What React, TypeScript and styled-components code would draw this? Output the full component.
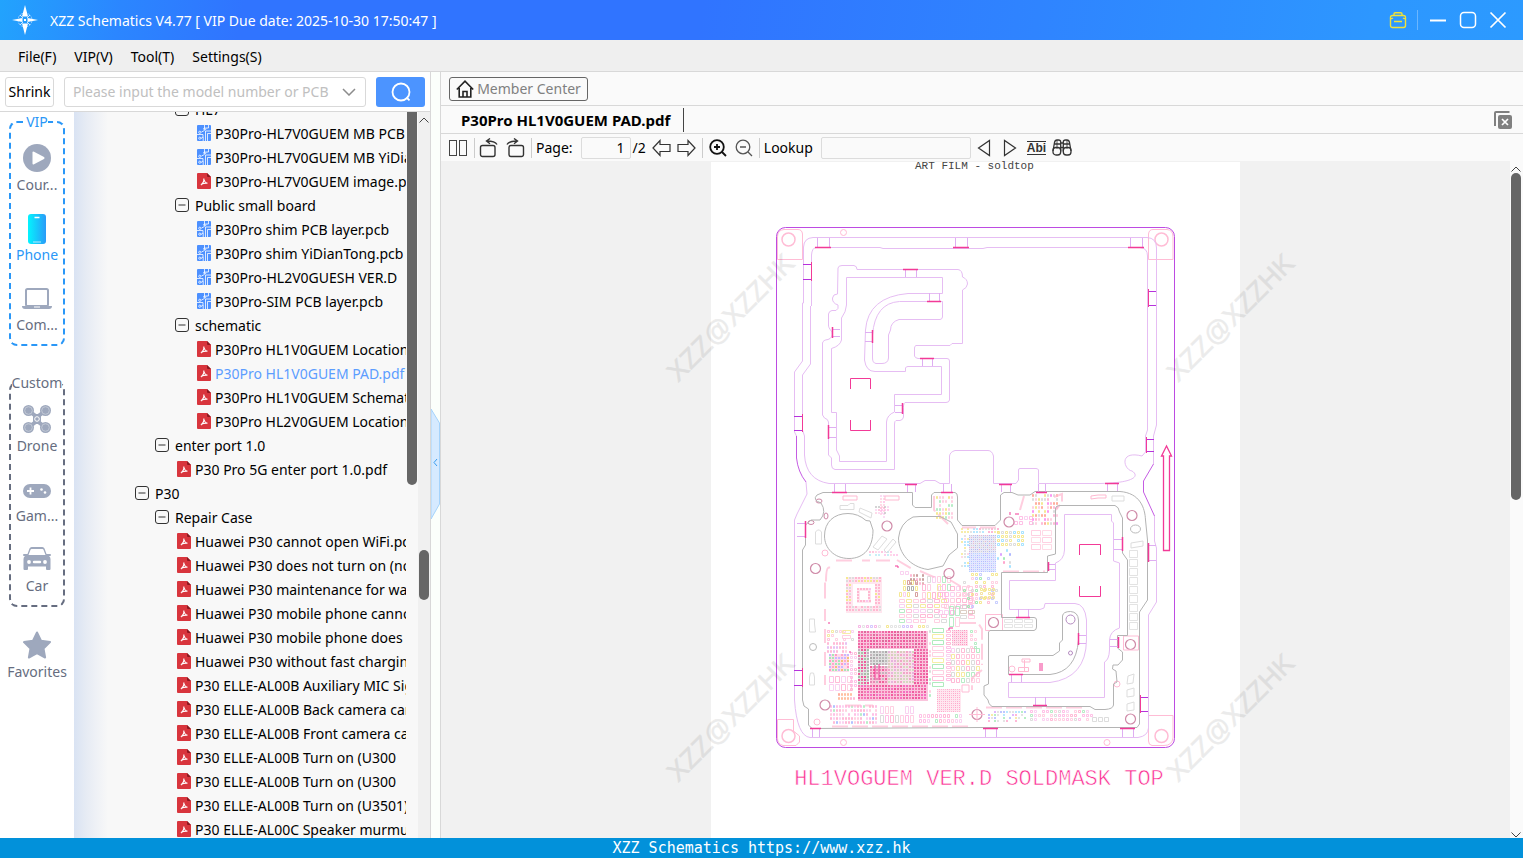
import React from 'react';
import styled, { createGlobalStyle } from 'styled-components';

const Global = createGlobalStyle`
  *, *::before, *::after { box-sizing: border-box; }
  body {
    margin: 0;
    font-family: "Noto Sans", "Open Sans", sans-serif;
    font-size: 14px;
    line-height: 20px;
    color: #000;
    overflow: hidden;
  }
  button, input { font: inherit; color: inherit; }
  button { cursor: pointer; }
  svg { display: block; flex: none; }
`;

const Window = styled.div`
  display: flex;
  flex-direction: column;
  height: 100vh;
  background: #fafafa;
`;

/* ---------- title bar ---------- */

const TitleBar = styled.header`
  display: flex;
  align-items: center;
  flex: none;
  height: 40px;
  padding: 0 16px 0 12px;
  background: linear-gradient(100deg, #22a3fd 0, #2b86ff 8%, #3074ff 16%, #3074ff 46%, #2f84ff 68%, #2d97ff 90%, #2c9aff 100%);
  color: #fff;
`;

const Title = styled.h1`
  flex: 1;
  margin: 0 0 0 12px;
  padding-top: 2px;
  font-size: 14px;
  font-weight: 400;
`;

const WindowButton = styled.button`
  display: flex;
  align-items: center;
  justify-content: center;
  width: 30px;
  height: 30px;
  padding: 0;
  border: 0;
  background: none;
  &:last-child { width: 18px; margin-left: 6px; }
`;

const TitleDivider = styled.span`
  width: 1px;
  height: 20px;
  margin: 0 5px 0 4px;
  background: #6bb6ff;
`;

const MenuBar = styled.nav`
  display: flex;
  align-items: center;
  flex: none;
  gap: 18px;
  height: 32px;
  padding: 0 18px;
  background: #efefef;
  border-bottom: 1px solid #d8d8d8;
`;

const MenuItem = styled.button`
  padding: 2px 0 0;
  border: 0;
  background: none;
`;

/* ---------- left side ---------- */

const Main = styled.main`
  display: flex;
  flex: 1;
  min-height: 0;
`;

const LeftPane = styled.section`
  display: flex;
  flex-direction: column;
  flex: none;
  width: 431px;
  border-right: 1px solid #d8d8d8;
  background: #fff;
`;

const SearchRow = styled.form`
  display: flex;
  align-items: center;
  flex: none;
  gap: 10px;
  height: 40px;
  padding: 0 5px;
  border-bottom: 1px solid #d8d8d8;
`;

const ShrinkButton = styled.button`
  width: 49px;
  height: 30px;
  padding: 0;
  border: 1px solid #d9d9d9;
  border-radius: 3px;
  background: #fff;
`;

const Combo = styled.label`
  display: flex;
  align-items: center;
  flex: 1;
  gap: 8px;
  min-width: 0;
  height: 30px;
  padding: 0 9px 0 8px;
  border: 1px solid #d9d9d9;
  border-radius: 3px;
`;

const ComboInput = styled.input`
  flex: 1;
  min-width: 0;
  padding: 0;
  border: 0;
  outline: 0;
  background: none;
  &::placeholder { color: #c0c0c0; opacity: 1; }
`;

const SearchButton = styled.button`
  display: flex;
  align-items: center;
  justify-content: center;
  width: 49px;
  height: 30px;
  padding: 0;
  border: 0;
  border-radius: 3px;
  background: #4c94ff;
`;

const LeftBody = styled.div`
  display: flex;
  flex: 1;
  min-height: 0;
`;

const Categories = styled.nav`
  display: flex;
  flex-direction: column;
  flex: none;
  width: 74px;
  padding: 0 9px;
`;

const Group = styled.fieldset<{ $active?: boolean }>`
  min-width: 0;
  margin: 0 0 27px;
  padding: 0 0 2px;
  border: 2px dashed ${p => (p.$active ? '#2a97f7' : '#666d80')};
  border-radius: 8px;
  & + & { margin-bottom: 12px; }
`;

const GroupName = styled.legend<{ $active?: boolean }>`
  margin: 0 auto;
  padding: 0;
  color: ${p => (p.$active ? '#2a97f7' : '#666d80')};
`;

const Category = styled.button<{ $active?: boolean }>`
  display: flex;
  flex-direction: column;
  align-items: center;
  width: 100%;
  height: 70px;
  padding: 10px 0 0;
  border: 0;
  background: none;
  color: ${p => (p.$active ? '#2a97f7' : '#666d80')};
  svg { margin-bottom: 1px; }
`;

const TreePane = styled.div`
  flex: 1;
  min-width: 0;
  overflow: hidden;
  background: linear-gradient(90deg, #d9e3f3 0, #e6ebf4 12px, #f8f8f8 34px);
`;

const TreeList = styled.ul`
  margin: -15px 0 0;
  padding: 0 1px 0 61px;
  list-style: none;
`;

const TreeRow = styled.li<{ $level: number; $selected?: boolean }>`
  display: flex;
  align-items: center;
  height: 24px;
  padding-left: ${p => p.$level * 20}px;
  overflow: hidden;
  white-space: nowrap;
  color: ${p => (p.$selected ? '#5c9dff' : '#000')};
`;

const TreeIcon = styled.span<{ $leaf: boolean }>`
  flex: none;
  width: 18px;
  margin-left: ${p => (p.$leaf ? '2px' : '0')};
  margin-right: ${p => (p.$leaf ? '0' : '2px')};
`;

const TreeName = styled.span`
  padding-top: 2px;
`;

const InnerTrack = styled.div`
  width: 11px;
  background: #f8f8f8;
`;

const InnerThumb = styled.div`
  width: 10px;
  height: 373px;
  border-radius: 0 0 5px 5px;
  background: #666;
`;

const Track = styled.div<{ $wide?: boolean }>`
  display: flex;
  flex-direction: column;
  align-items: center;
  flex: none;
  width: ${p => (p.$wide ? 13 : 12)}px;
  padding: 5px ${p => (p.$wide ? 1 : 0)}px 0 0;
  overflow: hidden;
  background: ${p => (p.$wide ? '#fafafa' : '#f0f0f0')};
`;

const Thumb = styled.div<{ $top: number; $height: number }>`
  flex: none;
  width: 10px;
  height: ${p => p.$height}px;
  margin-top: ${p => p.$top}px;
  border-radius: 5px;
  background: #666;
`;

const TrackEnd = styled.div`
  margin-top: auto;
`;

const Splitter = styled.div`
  display: flex;
  align-items: center;
  flex: none;
  width: 10px;
  padding-top: 18px;
  background: #fbfffb;
  border-right: 1px solid #d8d8d8;
`;

const SplitterHandle = styled.button`
  padding: 0;
  border: 0;
  background: none;
`;

/* ---------- right side ---------- */

const RightPane = styled.section`
  display: flex;
  flex-direction: column;
  flex: 1;
  min-width: 0;
`;

const TopTabs = styled.div`
  display: flex;
  align-items: center;
  flex: none;
  height: 34px;
  padding: 0 8px;
  border-bottom: 1px solid #d8d8d8;
`;

const MemberButton = styled.button`
  display: flex;
  align-items: center;
  justify-content: center;
  gap: 3px;
  width: 139px;
  height: 24px;
  padding: 0;
  border: 1px solid #666;
  border-radius: 3px;
  background: none;
  color: #808080;
`;

const DocTabs = styled.div`
  display: flex;
  align-items: center;
  justify-content: space-between;
  flex: none;
  height: 28px;
  padding: 0 11px 0 20px;
  border-bottom: 1px solid #d8d8d8;
`;

const DocTab = styled.button`
  height: 24px;
  padding: 0 13px 0 0;
  border: 0;
  border-right: 1px solid #444;
  background: none;
  font-size: 15px;
  font-weight: 700;
`;

const PlainButton = styled.button`
  display: flex;
  align-items: center;
  justify-content: center;
  padding: 0;
  border: 0;
  background: none;
`;

const Tools = styled.div`
  display: flex;
  align-items: center;
  flex: none;
  height: 27px;
  padding: 0 7px;
`;

const ToolGroup = styled.div<{ $gap: number; $lead?: number }>`
  display: flex;
  align-items: center;
  gap: ${p => p.$gap}px;
  margin-left: ${p => p.$lead || 0}px;
`;

const ToolDivider = styled.span`
  width: 1px;
  height: 20px;
  margin: 0 4px 0 6px;
  background: #ccc;
`;

const PageLabel = styled.label`
  display: flex;
  align-items: center;
  gap: 8px;
`;

const ToolInput = styled.input<{ $width: number }>`
  width: ${p => p.$width}px;
  height: 22px;
  padding: 0 5px;
  border: 1px solid #dcdcdc;
  border-radius: 2px;
  background: #fafafa;
  text-align: right;
`;

const WholeWord = styled.span`
  display: block;
  border-top: 1px solid #333;
  border-bottom: 1px solid #333;
  font-size: 12px;
  line-height: 12px;
  font-weight: 700;
  font-family: "Liberation Sans", sans-serif;
  color: #333;
`;

const Viewer = styled.div`
  display: flex;
  flex: 1;
  min-height: 0;
`;

const Desk = styled.div`
  display: flex;
  align-items: flex-start;
  justify-content: center;
  flex: 1;
  min-width: 0;
  padding-top: 1px;
  overflow: hidden;
  background: #f1f1f1;
`;

const Sheet = styled.svg`
  overflow: visible;
  background: #fff;
`;

const StatusBar = styled.footer`
  flex: none;
  height: 20px;
  background: #0291da;
  color: #fff;
  text-align: center;
  font-family: "DejaVu Sans Mono", monospace;
  font-size: 15px;
  line-height: 20px;
`;

/* ---------- icons ---------- */

const Logo = () => (
  <svg width="26" height="30" viewBox="0 0 26 30">
    <circle cx="13" cy="15" r="7" fill="none" stroke="#8fc8ff" strokeWidth="1" strokeDasharray="3 1" />
    <path d="M13 0l3 11.500h-6zM13 30l3-11.500h-6zM0 15l10.500-2v4zM26 15l-10.500-2v4z" fill="#fff" />
    <path d="M8 10l3 3M18 10l-3 3M8 20l3-3M18 20l-3-3" stroke="#cfe8ff" />
    <rect x="12" y="14" width="2" height="2" fill="#fff" />
  </svg>
);

const ToolboxIcon = () => (
  <svg width="18" height="18" viewBox="0 0 18 18" fill="none" stroke="#f0e23a" strokeWidth="1.400">
    <rect x="1.500" y="4.500" width="15" height="12" rx="2" />
    <path d="M5 4.500V3q0-1.200 1.200-1.200h5.600Q13 1.800 13 3v1.500M5 10.500h8M2 7q0 1.200 2 0M16 7q0 1.200-2 0" />
  </svg>
);

const MinimizeIcon = () => (
  <svg width="18" height="18" viewBox="0 0 18 18"><path d="M1 9.500h16" stroke="#fff" strokeWidth="2" /></svg>
);
const MaximizeIcon = () => (
  <svg width="18" height="18" viewBox="0 0 18 18"><rect x="1.500" y="1.500" width="15" height="15" rx="3.500" fill="none" stroke="#fff" strokeWidth="1.500" /></svg>
);
const CloseIcon = () => (
  <svg width="18" height="18" viewBox="0 0 18 18"><path d="M1.500 1.500l15 15M16.500 1.500l-15 15" stroke="#fff" strokeWidth="1.700" /></svg>
);

const ChevronDown = () => (
  <svg width="14" height="8" viewBox="0 0 14 8"><path d="M1 1l6 6 6-6" fill="none" stroke="#8c8c8c" strokeWidth="1.500" /></svg>
);
const ChevronUp = ({ flip }: { flip?: boolean }) => (
  <svg width="10" height="6" viewBox="0 0 10 6"><path d={flip ? 'M.5 .5L5 5 9.500 .5' : 'M.5 5.500L5 1l4.500 4.500'} fill="none" stroke="#444" /></svg>
);

const SearchIcon = () => (
  <svg width="20" height="20" viewBox="0 0 20 20" fill="none" stroke="#fff" strokeWidth="1.800">
    <circle cx="10" cy="10" r="8.500" />
    <path d="M15.500 15.500l3 2.800" />
  </svg>
);

const CourseIcon = () => (
  <svg width="28" height="32" viewBox="0 0 28 32">
    <circle cx="14" cy="16" r="14" fill="#9ea8bd" />
    <path d="M9.500 10.500q0-1.500 1.500-.8l10 5.300q1.300 1 0 2l-10 5.300q-1.500.7-1.500-.8z" fill="#fff" />
  </svg>
);
const PhoneIcon = () => (
  <svg width="28" height="32" viewBox="0 0 28 32">
    <defs>
      <linearGradient id="phone" x1="0" x2="1"><stop offset="0" stopColor="#04f4fe" /><stop offset="1" stopColor="#2a9bf8" /></linearGradient>
    </defs>
    <rect x="5" y="2" width="18" height="30" rx="3" fill="url(#phone)" />
    <path d="M11.500 5.500h5" stroke="#fff" strokeWidth="1.500" />
    <path d="M10 30h8" stroke="#b9ecff" />
  </svg>
);
const LaptopIcon = () => (
  <svg width="30" height="32" viewBox="0 0 30 32">
    <rect x="4" y="7" width="22" height="17" rx="1.500" fill="none" stroke="#9ea8bd" strokeWidth="2" />
    <path d="M0 24h30q0 3-3 3H3q-3 0-3-3z" fill="#9ea8bd" />
    <path d="M12 25h6" stroke="#fff" />
  </svg>
);
const DroneIcon = () => (
  <svg width="28" height="32" viewBox="0 0 28 32">
    <path d="M6 8l8 6 8-6M6 24l8-6 8 6" fill="none" stroke="#9ea8bd" strokeWidth="4" />
    <rect x="10" y="11" width="8" height="10" rx="3" fill="#9ea8bd" />
    {[[5.5, 7.5], [22.5, 7.5], [5.5, 24.5], [22.5, 24.5]].map(([x, y]) => (
      <g key={`${x}-${y}`}>
        <circle cx={x} cy={y} r="5.500" fill="#9ea8bd" />
        <circle cx={x} cy={y} r="3.800" fill="none" stroke="#c9cfdb" strokeWidth=".8" />
      </g>
    ))}
    <circle cx="14" cy="16" r="2.300" fill="none" stroke="#fff" />
  </svg>
);
const GameIcon = () => (
  <svg width="28" height="32" viewBox="0 0 28 32">
    <rect x="0" y="11" width="28" height="14" rx="7" fill="#9ea8bd" />
    <path d="M7.500 14.500v7M4 18h7" stroke="#fff" strokeWidth="1.800" />
    <circle cx="18.500" cy="16.500" r="1.300" fill="#fff" />
    <circle cx="22" cy="19.500" r="1.300" fill="#fff" />
  </svg>
);
const CarIcon = () => (
  <svg width="28" height="32" viewBox="0 0 28 32">
    <path transform="translate(0 2)" d="M6.500 3.500q.6-1.500 2.200-1.500h10.600q1.600 0 2.200 1.500L23.500 9H27q1 0 1 1t-1 1h-1q1.500 1 1.500 3v10q0 1-1 1H24q-1 0-1-1v-2.500H5V24q0 1-1 1H1.500q-1 0-1-1V14q0-2 1.500-3H1q-1 0-1-1t1-1h3.500z" fill="#9ea8bd" />
    <path d="M8.500 6h11q.7 0 1 .8l2 5.200h-17l2-5.200q.3-.8 1-.8z" fill="#fff" />
    <circle cx="6" cy="19" r="1.900" fill="#fff" />
    <circle cx="22" cy="19" r="1.900" fill="#fff" />
    <path d="M11 19h6" stroke="#fff" strokeWidth="2.400" strokeLinecap="round" />
  </svg>
);
const StarIcon = () => (
  <svg width="28" height="32" viewBox="0 0 28 32">
    <path d="M14 3.500l4 8.300 9 1.300-6.500 6.400 1.600 9-8.100-4.300-8.100 4.300 1.600-9L1 13.100l9-1.300z" fill="#9ea8bd" stroke="#9ea8bd" strokeWidth="2" strokeLinejoin="round" />
  </svg>
);

const CollapseIcon = () => (
  <svg width="14" height="14" viewBox="0 0 14 14" fill="none" stroke="#333">
    <rect x=".5" y=".5" width="13" height="13" rx="2.500" />
    <path d="M3.500 7h7" />
  </svg>
);
const PcbIcon = () => (
  <svg width="14" height="16" viewBox="0 0 14 16">
    <rect width="14" height="16" rx="1" fill="#4c90ff" />
    <g fill="none" stroke="#fff" strokeWidth=".8">
      <path d="M7.500 0v4.500M7.500 5.500L4.500 7M11.500 0v3H9M14 6H8.500v10M0 9.500h6V12L4 13.500M6.200 16v-4M10.500 16V8.500H14" />
      <circle cx="2.800" cy="7.300" r="1.100" />
      <circle cx="7.800" cy="3.800" r="1.100" />
      <circle cx="2.800" cy="13.200" r="1.100" />
    </g>
  </svg>
);
const PdfIcon = () => (
  <svg width="14" height="16" viewBox="0 0 14 16">
    <path d="M1 0h9l4 4v11q0 1-1 1H1q-1 0-1-1V1q0-1 1-1z" fill="#d8353d" />
    <path d="M10 0l4 4h-3q-1 0-1-1z" fill="#8c1820" />
    <path d="M6.700 5.500q.9 3-2.700 6.500M6.700 6q.8 3.500 3.800 4.200M4 11.500q3-1.700 6.500-1.300" fill="none" stroke="#fff" strokeWidth="1.100" />
  </svg>
);

const HomeIcon = () => (
  <svg width="18" height="18" viewBox="0 0 18 18" fill="none" stroke="#222" strokeWidth="1.600">
    <path d="M.8 9.500L9 1.200l8.200 8.300M3.200 8v9h11.600V8M7 17v-5.500h4V17" />
  </svg>
);
const CloseAllIcon = () => (
  <svg width="18" height="18" viewBox="0 0 18 18">
    <path d="M1 15V2q0-1 1-1h13.500" fill="none" stroke="#808080" strokeWidth="2" />
    <rect x="4" y="4" width="14" height="14" rx="2" fill="#808080" />
    <path d="M8 8l6 6M14 8l-6 6" stroke="#fff" strokeWidth="1.700" />
  </svg>
);
const TwoPagesIcon = () => (
  <svg width="20" height="18" viewBox="0 0 20 18" fill="none" stroke="#444">
    <rect x="1.500" y="1.500" width="7" height="15" /><rect x="11.500" y="1.500" width="7" height="15" />
  </svg>
);
const RotateIcon = ({ flip }: { flip?: boolean }) => (
  <svg width="19" height="20" viewBox="0 0 19 20" fill="none" stroke="#333" strokeWidth="1.400">
    <g transform={flip ? 'matrix(-1 0 0 1 19 0)' : undefined}>
      <rect x="1.500" y="7.500" width="14.500" height="11" rx="2" />
      <path d="M18 6.500Q16 3 8 3M11 .5L7.500 3 11 5.800" />
    </g>
  </svg>
);
const ArrowIcon = ({ flip }: { flip?: boolean }) => (
  <svg width="19" height="18" viewBox="0 0 19 18" fill="none" stroke="#333" strokeWidth="1.200">
    <path transform={flip ? 'matrix(-1 0 0 1 19 0)' : undefined} d="M1 9l7-7.500V5.500h10v7H8v4z" />
  </svg>
);
const ZoomIcon = ({ plus }: { plus?: boolean }) => (
  <svg width="18" height="18" viewBox="0 0 18 18" fill="none" stroke={plus ? '#111' : '#555'} strokeWidth={plus ? 1.8 : 1.3}>
    <circle cx="8" cy="8" r="6.800" />
    <path d={plus ? 'M13 13l4 4M5 8h6M8 5v6' : 'M13 13l4 4M5 8h6'} />
  </svg>
);
const TriangleIcon = ({ flip }: { flip?: boolean }) => (
  <svg width="14" height="18" viewBox="0 0 14 18" fill="none" stroke="#333" strokeWidth="1.200">
    <path transform={flip ? 'matrix(-1 0 0 1 14 0)' : undefined} d="M1.500 9L12.500 1.500v15z" />
  </svg>
);
const BinocularsIcon = () => (
  <svg width="20" height="17" viewBox="0 0 20 17" fill="none" stroke="#333" strokeWidth="1.300">
    <path d="M1 12L2.500 3.500Q3 1 5 1h1.500Q8.700 1 8.700 3v9.500M19 12l-1.500-8.500Q17 1 15 1h-1.500Q11.300 1 11.300 3v9.500M8.700 4h2.600M8.700 8.500h2.600M2.300 5h6.400M11.300 5h6.400" />
    <rect x="1" y="8.500" width="7.700" height="7.500" rx="3" /><rect x="11.300" y="8.500" width="7.700" height="7.500" rx="3" />
    <path d="M5 1v9M15 1v9" strokeWidth=".8" />
  </svg>
);
const HandleIcon = () => (
  <svg width="9" height="110" viewBox="0 0 9 110">
    <path d="M0 0l8.500 14v81L0 110z" fill="#d6eaff" stroke="#a5d3fb" />
    <path d="M6 50L3 53.500 6 57" fill="none" stroke="#3a9df0" />
  </svg>
);

/* ---------- board drawing ---------- */

const LILAC = '#e6bdf3';
const HOT = '#f23a97';
const SOFT = '#ffbcd5';
const GREY = '#b4b4b4';
const PURPLE = '#b632dc';

type Tab = [number, number, number, number, 't' | 'b' | 'l' | 'r'];

// Frame bridges: x, y, width, height and the edge that carries the solder bar.
const tabs: Tab[] = [
  [817, 238, 12, 9, 'b'], [955, 238, 12, 9, 'b'], [1130, 238, 12, 9, 'b'],
  [905, 269, 11, 8, 't'], [929, 293, 10, 8, 'b'], [865, 332, 7, 9, 'r'],
  [832, 329, 8, 7, 'l'], [922, 358, 10, 8, 't'], [895, 405, 7, 7, 'r'],
  [828, 427, 8, 10, 'l'], [834, 484, 11, 8, 'b'], [907, 484, 8, 8, 't'],
  [943, 484, 8, 8, 'b'], [1001, 484, 9, 8, 't'], [1038, 484, 7, 8, 'b'],
  [1107, 483, 10, 8, 't'], [797, 523, 8, 13, 'r'], [1148, 545, 8, 15, 'l'],
  [1114, 539, 8, 10, 'r'], [1048, 564, 7, 5, 'l'], [1018, 609, 10, 8, 'b'],
  [1078, 635, 8, 8, 'l'], [1110, 639, 8, 7, 'r'], [1011, 674, 10, 8, 't'],
  [1035, 697, 10, 8, 'b'], [812, 728, 7, 9, 't'], [985, 728, 11, 9, 't'],
  [1122, 728, 11, 9, 't'],
];

const darkTabs: Tab[] = [
  [803, 264, 8, 15, 'r'], [794, 416, 8, 14, 'r'], [1148, 291, 8, 14, 'l'],
  [1146, 439, 8, 12, 'l'], [794, 670, 8, 15, 'r'], [1140, 697, 8, 14, 'l'],
];

const barPath = ([x, y, w, h, side]: Tab) => {
  switch (side) {
    case 't': return `M${x - 2} ${y}.5h${w + 4}`;
    case 'b': return `M${x - 2} ${y + h}.5h${w + 4}`;
    case 'l': return `M${x}.5 ${y - 2}v${h + 4}`;
    default: return `M${x + w}.5 ${y - 2}v${h + 4}`;
  }
};

const legPath = ([x, y, w, h, side]: Tab) =>
  side === 't' || side === 'b'
    ? `M${x}.5 ${y}v${h}M${x + w}.5 ${y}v${h}`
    : `M${x} ${y}.5h${w}M${x} ${y + h}.5h${w}`;

type Cluster = {
  x: number; y: number; w: number; h: number;
  cell: [number, number]; density: number; colors: string[]; filled?: boolean;
};

const PINKS = ['#ffa9cb', '#ffc4db', '#ffb0e0', '#f9c6ee'];
const MIXED = ['#ffa9cb', '#ffc4db', '#f7c7ef', '#ffc4db', '#f2e58a', '#a5e8b8', '#d3d3d3', '#ffb4d2'];
const BRIGHT = ['#f3e27a', '#8fe6a5', '#8fdcff', '#ff8fc0', '#d08fff', '#9aa6ff', '#d4d4d4'];

const clusters: Cluster[] = [
  { x: 899, y: 580, w: 22, h: 18, cell: [4, 6], density: 0.8, colors: ['#999', '#f3e27a', '#c88', '#f9c6ee', '#f3e27a'] },
  { x: 899, y: 599, w: 50, h: 28, cell: [7, 5], density: 0.95, colors: MIXED },
  { x: 910, y: 574, w: 15, h: 14, cell: [3, 4], density: 0.9, colors: ['#b88', '#ffa9cb', '#d9a0a0'] },
  { x: 922, y: 576, w: 30, h: 24, cell: [5, 8], density: 0.85, colors: MIXED },
  { x: 900, y: 571, w: 12, h: 8, cell: [5, 5], density: 0.9, colors: PINKS },
  { x: 938, y: 586, w: 36, h: 34, cell: [6, 6], density: 0.8, colors: PINKS },
  { x: 949, y: 606, w: 12, h: 22, cell: [6, 11], density: 1, colors: ['#a5e8b8', '#ffc4db'] },
  { x: 932, y: 628, w: 20, h: 60, cell: [13, 6], density: 0.95, colors: ['#9ae6ac', '#ffc4db', '#f4ea8f', '#ffb0d0', '#ffc4db'] },
  { x: 946, y: 630, w: 6, h: 56, cell: [6, 4], density: 0.8, colors: PINKS },
  { x: 951, y: 648, w: 30, h: 40, cell: [5, 6], density: 0.9, colors: MIXED },
  { x: 970, y: 630, w: 7, h: 20, cell: [4, 4], density: 0.9, colors: ['#a5e8b8', '#ffc4db'] },
  { x: 829, y: 676, w: 27, h: 18, cell: [6, 8], density: 1, colors: PINKS },
  { x: 850, y: 652, w: 8, h: 40, cell: [4, 4], density: 0.7, colors: PINKS },
  { x: 827, y: 642, w: 20, h: 12, cell: [3, 4], density: 0.8, colors: ['#ffc4db', '#e0b0f0', '#ffa9cb'] },
  { x: 827, y: 630, w: 28, h: 14, cell: [4, 4], density: 0.5, colors: MIXED },
  { x: 842, y: 630, w: 14, h: 12, cell: [10, 5], density: 0.9, colors: ['#f4ea8f', '#ffc4db'] },
  { x: 838, y: 693, w: 18, h: 8, cell: [3, 4], density: 0.95, colors: ['#ff9a86', '#ffa9cb', '#ffb08a'] },
  { x: 830, y: 705, w: 48, h: 21, cell: [3, 4], density: 0.9, colors: [...PINKS, ...PINKS, '#a5e8b8', '#9db0ff'] },
  { x: 880, y: 706, w: 38, h: 20, cell: [5, 9], density: 0.95, colors: [...PINKS, ...PINKS, '#a5e8b8', '#d3d3d3'] },
  { x: 919, y: 714, w: 44, h: 11, cell: [4, 5], density: 0.95, colors: [...PINKS, '#a5e8b8'] },
  { x: 858, y: 625, w: 72, h: 4, cell: [4, 4], density: 0.9, colors: ['#f3e27a', '#ddd', '#f5a5e0', '#c9b8ff'] },
  { x: 929, y: 630, w: 4, h: 70, cell: [3, 4], density: 0.7, colors: ['#a5e8b8', '#ffc4db', '#d3d3d3'] },
  { x: 880, y: 495, w: 6, h: 24, cell: [3, 3], density: 0.9, colors: PINKS },
  { x: 875, y: 506, w: 14, h: 10, cell: [3, 3], density: 0.8, colors: [...PINKS, '#bbb'] },
  { x: 869, y: 551, w: 30, h: 6, cell: [3, 3], density: 0.85, colors: [...PINKS, '#a8e6f2'] },
  { x: 936, y: 496, w: 18, h: 26, cell: [3, 4], density: 0.75, colors: ['#f3e27a', '#ffc4db', '#f3e27a', '#a5e8b8', '#ffc4db'] },
  { x: 961, y: 528, w: 38, h: 7, cell: [3, 3], density: 0.9, colors: ['#f3e27a', '#ff8fc0', '#d4d4d4', '#8fdcff'] },
  { x: 961, y: 535, w: 8, h: 34, cell: [3, 3], density: 0.8, colors: ['#f3e27a', '#ffc4db', '#d4d4d4', '#8fdcff'] },
  { x: 997, y: 531, w: 30, h: 18, cell: [4, 4], density: 0.85, colors: ['#f3e27a', '#f3e27a', '#d4d4d4', '#8fdcff'] },
  { x: 997, y: 549, w: 16, h: 22, cell: [3, 4], density: 0.5, colors: BRIGHT },
  { x: 963, y: 573, w: 36, h: 38, cell: [4, 4], density: 0.55, colors: ['#f3e27a', '#8fe6a5', '#ffb0cb', '#b9c0ff', '#d4d4d4', '#ffc4db'] },
  { x: 980, y: 588, w: 16, h: 14, cell: [4, 4], density: 0.9, colors: ['#f3dc8a', '#f3e27a'] },
  { x: 960, y: 600, w: 16, h: 22, cell: [8, 5], density: 0.7, colors: ['#ffc4db', '#d3c3b6', '#d4d4d4'] },
  { x: 1032, y: 494, w: 26, h: 32, cell: [3, 4], density: 0.75, colors: ['#ff9a86', '#ffa9cb', '#d4d4d4', '#f97ef0', '#f3e27a', '#ffc4db'] },
  { x: 1031, y: 530, w: 22, h: 26, cell: [11, 7], density: 1, colors: ['#ffc4db', '#ffd0e0'] },
  { x: 1014, y: 516, w: 20, h: 11, cell: [5, 5], density: 0.7, colors: PINKS },
  { x: 1004, y: 619, w: 31, h: 10, cell: [10, 5], density: 1, colors: ['#dedede'] },
  { x: 1129, y: 550, w: 10, h: 84, cell: [10, 9], density: 1, colors: ['#dcdcdc'] },
  { x: 988, y: 711, w: 40, h: 12, cell: [3, 3], density: 0.7, colors: BRIGHT },
  { x: 1030, y: 710, w: 64, h: 14, cell: [4, 4], density: 0.8, colors: [...PINKS, ...PINKS, '#a5e8b8', '#d4d4d4'] },
  { x: 1092, y: 717, w: 20, h: 7, cell: [6, 6], density: 0.8, colors: ['#ffc4db', '#d4d4d4'] },
  { x: 846, y: 577, w: 36, h: 7, cell: [3, 3], density: 0.95, colors: ['#ffb8d0', '#ddd', '#f4ea8f'], filled: true },
  { x: 846, y: 606, w: 36, h: 7, cell: [3, 3], density: 0.95, colors: ['#ffb8d0', '#ddd', '#ffb8d0'], filled: true },
  { x: 846, y: 584, w: 7, h: 22, cell: [3, 3], density: 0.95, colors: ['#ffb8d0', '#ddd', '#f4ea8f'], filled: true },
  { x: 875, y: 584, w: 7, h: 22, cell: [3, 3], density: 0.95, colors: ['#ffb8d0', '#ffb8d0', '#f4ea8f'], filled: true },
  { x: 857, y: 588, w: 14, h: 3, cell: [3, 3], density: 0.95, colors: ['#ffb8d0', '#f9c6ee'], filled: true },
  { x: 857, y: 600, w: 14, h: 3, cell: [3, 3], density: 0.95, colors: ['#ffb8d0', '#f9c6ee'], filled: true },
  { x: 857, y: 591, w: 3, h: 9, cell: [3, 3], density: 0.95, colors: ['#ffb8d0'], filled: true },
  { x: 868, y: 591, w: 3, h: 9, cell: [3, 3], density: 0.95, colors: ['#ffb8d0'], filled: true },
  { x: 829, y: 654, w: 20, h: 18, cell: [3, 3], density: 0.95, colors: ['#ff9cc4', '#ffa9cb', '#f3c27a', '#c9b8ff', '#a5e8b8'], filled: true },
  { x: 952, y: 630, w: 16, h: 16, cell: [2, 2], density: 1, colors: ['#ffa3c8', '#ff8fbc', '#e9b9d0'], filled: true },
  { x: 937, y: 689, w: 24, h: 23, cell: [2, 2], density: 1, colors: ['#ffb9d5', '#ffa9cb'], filled: true },
  { x: 969, y: 535, w: 27, h: 18, cell: [2, 2], density: 1, colors: ['#c4c4e6', '#d2d2d2', '#b2baf5', '#ecb5cf'], filled: true },
  { x: 969, y: 553, w: 27, h: 19, cell: [2, 2], density: 1, colors: ['#b3bcff', '#c8c0ff', '#b9d4ff'], filled: true },
  { x: 858, y: 631, w: 70, h: 18, cell: [3, 3], density: 1, colors: ['#f05a9e', '#f47ab2', '#ee6aa6', '#dd6c9c'], filled: true },
  { x: 858, y: 685, w: 70, h: 16, cell: [3, 3], density: 1, colors: ['#f05a9e', '#f47ab2', '#ee6aa6', '#f56ec0'], filled: true },
  { x: 858, y: 649, w: 11, h: 36, cell: [3, 3], density: 1, colors: ['#a9bda9', '#e87aa8', '#c7a9c0', '#f05a9e'], filled: true },
  { x: 914, y: 649, w: 14, h: 36, cell: [3, 3], density: 1, colors: ['#f05a9e', '#f47ab2', '#ee6aa6'], filled: true },
  { x: 870, y: 651, w: 18, h: 14, cell: [3, 3], density: 1, colors: ['#aaa', '#c5b5bd', '#bbb'], filled: true },
  { x: 888, y: 651, w: 26, h: 34, cell: [3, 3], density: 1, colors: ['#f2a5c8', '#d8cdbd', '#d3dac0', '#e6b4dc'], filled: true },
  { x: 870, y: 666, w: 18, h: 19, cell: [3, 3], density: 0.9, colors: ['#f0609c', '#c3b4bc', '#e88ab4'], filled: true },
];

const makeRandom = (seed: number) => {
  let s = seed;
  return () => {
    s = (s * 48271) % 2147483647;
    return s / 2147483647;
  };
};

const Parts = ({ cluster, seed }: { cluster: Cluster; seed: number }) => {
  const random = makeRandom(seed * 7919 + 17);
  const byColor: Record<string, string> = {};
  const [cw, ch] = cluster.cell;
  for (let y = cluster.y; y + ch <= cluster.y + cluster.h + 1; y += ch) {
    for (let x = cluster.x; x + cw <= cluster.x + cluster.w + 1; x += cw) {
      random();
      const roll = random();
      const color = cluster.colors[Math.floor(random() * cluster.colors.length)];
      if (roll > cluster.density) continue;
      const w = cluster.filled ? cw - 1 : cw - 2;
      const h = cluster.filled ? ch - 1 : ch - 2;
      const o = cluster.filled ? '' : '.5';
      byColor[color] = (byColor[color] || '') + `M${x}${o} ${y}${o}h${w}v${h}h${-w}z`;
    }
  }
  return (
    <>
      {cluster.filled && (
        <rect x={cluster.x} y={cluster.y} width={cluster.w} height={cluster.h} fill={cluster.colors[0]} opacity=".35" />
      )}
      {Object.entries(byColor).map(([color, d]) => (
        <path key={color} d={d} fill={cluster.filled ? color : 'none'} stroke={cluster.filled ? 'none' : color} strokeWidth="0.8" />
      ))}
    </>
  );
};

const FrameLines = () => (
  <g fill="none" stroke={LILAC}>
    <path d="M813 237.500H1147Q1156.500 238 1156.500 248V425L1153.500 436V464M803.500 303V247Q804 238 813 237.500M803.500 303L802.500 303V361L794.500 372V432L796.500 436M806 482L807 494L797 514L794.500 520V700Q797 736 810 737.500H1138Q1148 736 1148.500 728V615L1156.500 602V548L1154.500 541V516" />
    <path d="M811.500 306V255Q812 248 816 247.500H880L883 248.500H983L987 247.500H1140Q1147.500 248 1147.500 256V430L1145.500 436V452L1142 456C1118 450 1124 470 1132 471C1140 476 1134 483 1100 483.500H1038.500V470Q1038 468.500 1036 468.500H1020Q1018.500 468.500 1018.500 470V480L1016 483.500H993.500V456Q992 450.500 988 450.500H955Q950 452 949.500 456V483.500H940L935 480.500H925L920 483.500H829Q806 480 804.500 455V436L802.500 430V375L810.500 364V306" />
    <path d="M838 268Q838.500 265.500 842 265.500H854Q857 266 857 269.500H958Q962.500 270 962.500 277Q967.500 279 967.500 284Q967 288 962.500 290V343.500H952L950 345.500H916Q914.500 346 914.500 348V356Q915 358 918 358.500H947Q949.500 358.500 949.500 361V400Q949 402.500 946 402.500H905Q903 404 903.500 410V417Q903 420 900 420.500H896Q894.500 421 894.500 424V469.500H835Q831.500 469 831.500 465V458L828.500 455V422Q828 419 824.500 418L822.500 415V343Q823 340 828 339.500Q833 338 832 332Q828 327 828.500 325V314Q829 311 832 310.500H836Q839 309 838 305Q832 303 832.500 298Q833 294 837.500 294Z" />
    <path d="M846.500 277.500H942.500V293.500H908Q868 297 865.500 330L864.500 360Q866 371.500 875 371.500H905.500V368Q906 366.500 908 366.500H941.500V394.500H894.500V412Q887 415 886.500 422V461.500H839.500V456L836.500 450V412.500H831.500V348.500Q840 346 841.500 340V318Q846 312 846.500 305Z" />
    <path d="M899.500 301.500H942.500V317Q942 319.500 940 319.500H899Q890.500 322 890.500 330L888.500 335V358Q888 363.500 882 363.500H876Q872.500 363 872.500 358V335Q875 303 899.500 301.500" />
    <path d="M1009.500 580.500H1055.500V563Q1064 560 1064.500 550V514.500H1111.500V521L1113.500 523V561L1119.500 563V628Q1110 631 1109.500 640V650Q1109 660 1104.500 662V697.500H1008.500V682.500H1050Q1086 678 1086.500 640V620Q1085 604 1075 603.500H1045L1044 608L1040 609.500H1009.500Z" />
  </g>
);

const BoardLines = () => (
  <g fill="none" stroke={GREY}>
    <path d="M823 492.500H912.500V505L915 507.500H931.500V495L934 492.500H955Q957.500 493 957.500 497V520L962 525.500H995L1000.500 520V495L1004 492.500H1012L1018 495H1030L1035 491.500H1120C1140 493 1145 508 1145.500 520L1147.500 540V600L1139.500 612V724L1137 727.500H980L812 728.500L808.500 725V709L804 706L802.500 700V550L805.500 545V525L811 520H820Q827 512 821 503Q812 500 817 495Z" />
    <path d="M866 520.500L870 521L873 530C873 548 864 558.500 849 558.500C834 558.500 824.500 548 824.500 536C824.500 522 834 513.500 848 513.500Q858 513.500 866 520.500Z" />
    <path d="M913 517L920 516.500H940L951 522Q956 531 957.500 534V548L949 555L943 566L928 569.500C910 567 898.500 553 898.500 538Q900 523 913 517Z" />
    <path d="M1001.500 617.500V572.500H1047.500V556L1055.500 554V508Q1056 505.500 1060 505.500H1115Q1119 507 1119.500 512L1122.500 518V553L1127.500 560V635.500H1117.500V648L1122.500 652V660L1118 665H1113L1112.500 669L1116 671L1117 682L1113.500 684V705Q1113 709 1105 709.500H1095L1090 706.500H992Q988 704 988 700L984 695V686L988.500 684V632L990 630.500H1034Q1036.500 630 1036.500 627V620Q1036.500 617.500 1034 617.500Z" />
    <path d="M1008.500 656V674.500H1050Q1076 672 1078.500 640V620Q1078 612 1070.500 611.500Q1063 611.500 1062.500 616V640L1059.500 643V651L1053 655.500H1010Z" />
  </g>
);

const Holes = () => (
  <g fill="none">
    <g stroke={SOFT}>
      {[[788.5, 239.5], [1161.5, 239.5], [788.5, 736], [1161.5, 736]].map(([x, y]) => (
        <circle key={`${x}-${y}`} cx={x} cy={y} r="6.500" strokeWidth="1.500" />
      ))}
      {[[843.5, 232.5], [843.5, 742.5], [1107, 742.5], [825, 553], [817, 722], [1012, 669], [1117, 684]].map(([x, y]) => (
        <circle key={`${x}-${y}`} cx={x} cy={y} r="3" />
      ))}
      <path d="M777.500 259.500H802.500V234Q802 229.500 798 229.500H784Q777.500 230 777.500 237ZM1173 259.500H1148.500V234Q1149 229.500 1153 229.500H1167Q1173 230 1173 237ZM777.500 719.500H793.500V731L799.500 736V742L796 745.500H783Q777.500 744 777.500 738ZM1148.500 715.500H1173V738Q1172 745.500 1164 745.500H1152Q1148.500 745 1148.500 741Z" />
    </g>
    <g stroke="#cf8aa8">
      {[[887, 526], [815.5, 568.5], [949, 573.5], [1009, 522], [1132, 515.5], [1130.5, 644.5], [1130.5, 719], [993.5, 622.5], [977, 714.5], [825, 705]].map(([x, y]) => (
        <circle key={`${x}-${y}`} cx={x} cy={y} r="5" strokeWidth="1.200" />
      ))}
      <circle cx="1070.500" cy="619.500" r="4.500" stroke="#b48ac0" />
      <circle cx="1070.500" cy="653" r="2" stroke="#b48ac0" />
      <ellipse cx="819" cy="501" rx="3" ry="2" /><ellipse cx="826" cy="516" rx="2" ry="3" /><ellipse cx="811" cy="522.500" rx="3" ry="2" />
    </g>
    <g stroke="#ddd">
      <circle cx="813" cy="647" r="3.500" stroke="#bbb" />
      <ellipse cx="1135.500" cy="529" rx="5" ry="4" stroke="#bbb" />
      <path d="M809.500 624v-5h5v5l1 8h-6zM809.500 677v8h5v-8l-1-4h-3zM815.500 544V532l2-2h2l2 2v12zM840 505.500h8l2-2h4v6h-14zM860 508l12 5-1 5-12-6zM873 547l9-11 5 3-9 11zM884 550l9-11 3 3-9 11zM1112 496h12v5h-12zM1131 543l12-2v5l-12 2z" />
      <path d="M1128 676l6-2-1 9-6 1zM1127 690l7-2v8l-7 1zM1127 704l7-2v8l-7 1z" />
    </g>
    <g stroke="#ffb9d1">
      <path d="M843 496h14v4h-14zM885 496h14v4h-14zM1018.500 667.500h10v4h-10zM1022 659h8v3h-8zM1098 498h8v-3h-8l-7 1v3zM1024.500 660v12" />
      <path d="M826 581.500q0-14 3-14h2M825 582.500v16M825 609v12M825 629v14M825 652v14M825 675v10M836 560.500h16M862 560.500h8M876 560.500h14M897 560l15 9M920 571l16 7M950 580l10 6v10M960 623h18l4 6v36M982 670l-10 8v12M934 496v14l14 14M845 705.500h28M1003 571.500h42M986 707.500h100M832 726.500h136M962 527.500h14M980 527.500h18M1020 510l4-14M1054 497l8-3v8l-6 8" strokeWidth="2" strokeDasharray="16 4" opacity=".7" />
    </g>
    <g stroke={SOFT}>
      <path d="M985.500 614.500h17v16h-17zM962 685h7v7h-7zM969 714.500h16M977 707v15M1123.500 636h15v14h-15z" />
    </g>
  </g>
);

const Marks = () => (
  <g fill="none" stroke={HOT}>
    <path d="M850.500 389V378.500H870.500V389M850.500 420V430.500H870.500V420M1079.500 555V544.500H1100.500V555M1079.500 586V596.500H1100.500V586" />
    <path d="M1166.500 446L1161.500 456H1163.500V550.500H1169.500V456H1171.500Z" strokeWidth="1.300" />
    <path d="M895 566h3v2M949 630v-2h4M829 624v-2M849 652h2M875 665v15M879 664v16M1010 512v3M1015 514h4M1040 663v8M1042 663v8" />
  </g>
);

const Watermark = ({ x, y }: { x: number; y: number }) => (
  <text transform={`translate(${x} ${y}) rotate(-45)`} fontFamily="Liberation Sans, sans-serif" fontSize="27" fill="#000" stroke="#000" strokeWidth=".6" opacity=".075">
    XZZ@XZZHK
  </text>
);

const Drawing = () => (
  <Sheet width="529" height="748" viewBox="711 162 529 748" role="img" aria-label="Solder mask drawing">
    <text x="915" y="169" fontFamily="Liberation Mono, monospace" fontSize="11" fill="#444">ART FILM - soldtop</text>
    {clusters.map((c, i) => <Parts key={i} cluster={c} seed={i + 1} />)}
    <Holes />
    <FrameLines />
    <BoardLines />
    <path d={tabs.map(legPath).join('')} fill="none" stroke="#dfaef2" />
    <path d={tabs.map(barPath).join('')} stroke={HOT} strokeWidth="1.500" fill="none" />
    <g fill="none" stroke={PURPLE}>
      <path d={darkTabs.map(legPath).join('')} />
      <path d="M796.500 436V458Q798 472 806 482M1153.500 464L1143.500 481V492L1154.500 516" strokeWidth=".8" />
      <rect x="776.500" y="227.500" width="398" height="520" rx="9" stroke="#bd4be2" />
    </g>
    <path d={darkTabs.map(barPath).join('')} stroke={HOT} fill="none" />
    <Marks />
    <text x="979" y="785" textAnchor="middle" fontFamily="Liberation Mono, monospace" fontSize="22" fill="#fb2f92" stroke="#fff" strokeWidth=".6">
      HL1VOGUEM VER.D SOLDMASK TOP
    </text>
    <Watermark x={678} y={383} />
    <Watermark x={1178} y={383} />
    <Watermark x={678} y={783} />
    <Watermark x={1178} y={783} />
  </Sheet>
);

/* ---------- data ---------- */

type Node = { kind: 'folder' | 'pdf' | 'pcb'; level: number; name: string; selected?: boolean };

const tree: Node[] = [
  { kind: 'folder', level: 2, name: 'HL7' },
  { kind: 'pcb', level: 3, name: 'P30Pro-HL7V0GUEM MB PCB layer.pcb' },
  { kind: 'pcb', level: 3, name: 'P30Pro-HL7V0GUEM MB YiDianTong.pcb' },
  { kind: 'pdf', level: 3, name: 'P30Pro-HL7V0GUEM image.pdf' },
  { kind: 'folder', level: 2, name: 'Public small board' },
  { kind: 'pcb', level: 3, name: 'P30Pro shim PCB layer.pcb' },
  { kind: 'pcb', level: 3, name: 'P30Pro shim YiDianTong.pcb' },
  { kind: 'pcb', level: 3, name: 'P30Pro-HL2V0GUESH VER.D' },
  { kind: 'pcb', level: 3, name: 'P30Pro-SIM PCB layer.pcb' },
  { kind: 'folder', level: 2, name: 'schematic' },
  { kind: 'pdf', level: 3, name: 'P30Pro HL1V0GUEM Location.pdf' },
  { kind: 'pdf', level: 3, name: 'P30Pro HL1V0GUEM PAD.pdf', selected: true },
  { kind: 'pdf', level: 3, name: 'P30Pro HL1V0GUEM Schematic.pdf' },
  { kind: 'pdf', level: 3, name: 'P30Pro HL2V0GUEM Location.pdf' },
  { kind: 'folder', level: 1, name: 'enter port 1.0' },
  { kind: 'pdf', level: 2, name: 'P30 Pro 5G enter port 1.0.pdf' },
  { kind: 'folder', level: 0, name: 'P30' },
  { kind: 'folder', level: 1, name: 'Repair Case' },
  { kind: 'pdf', level: 2, name: 'Huawei P30 cannot open WiFi.pdf' },
  { kind: 'pdf', level: 2, name: 'Huawei P30 does not turn on (no current).pdf' },
  { kind: 'pdf', level: 2, name: 'Huawei P30 maintenance for water.pdf' },
  { kind: 'pdf', level: 2, name: 'Huawei P30 mobile phone cannot charge.pdf' },
  { kind: 'pdf', level: 2, name: 'Huawei P30 mobile phone does not ring.pdf' },
  { kind: 'pdf', level: 2, name: 'Huawei P30 without fast charging.pdf' },
  { kind: 'pdf', level: 2, name: 'P30 ELLE-AL00B Auxiliary MIC Signal.pdf' },
  { kind: 'pdf', level: 2, name: 'P30 ELLE-AL00B Back camera cannot open.pdf' },
  { kind: 'pdf', level: 2, name: 'P30 ELLE-AL00B Front camera cannot open.pdf' },
  { kind: 'pdf', level: 2, name: 'P30 ELLE-AL00B Turn on (U300' },
  { kind: 'pdf', level: 2, name: 'P30 ELLE-AL00B Turn on (U300' },
  { kind: 'pdf', level: 2, name: 'P30 ELLE-AL00B Turn on (U3501).pdf' },
  { kind: 'pdf', level: 2, name: 'P30 ELLE-AL00C Speaker murmur.pdf' },
];

const nodeIcons = { folder: <CollapseIcon />, pdf: <PdfIcon />, pcb: <PcbIcon /> };

const vipCategories = [
  { name: 'Cour...', icon: <CourseIcon /> },
  { name: 'Phone', icon: <PhoneIcon />, active: true },
  { name: 'Com...', icon: <LaptopIcon /> },
];
const customCategories = [
  { name: 'Drone', icon: <DroneIcon /> },
  { name: 'Gam...', icon: <GameIcon /> },
  { name: 'Car', icon: <CarIcon /> },
];

export default function App() {
  return (
    <Window>
      <Global />
      <TitleBar>
        <Logo />
        <Title>XZZ Schematics V4.77 [ VIP Due date: 2025-10-30 17:50:47 ]</Title>
        <WindowButton aria-label="Toolbox"><ToolboxIcon /></WindowButton>
        <TitleDivider />
        <WindowButton aria-label="Minimize"><MinimizeIcon /></WindowButton>
        <WindowButton aria-label="Maximize"><MaximizeIcon /></WindowButton>
        <WindowButton aria-label="Close"><CloseIcon /></WindowButton>
      </TitleBar>
      <MenuBar>
        {['File(F)', 'VIP(V)', 'Tool(T)', 'Settings(S)'].map(m => <MenuItem key={m}>{m}</MenuItem>)}
      </MenuBar>
      <Main>
        <LeftPane>
          <SearchRow onSubmit={e => e.preventDefault()}>
            <ShrinkButton type="button">Shrink</ShrinkButton>
            <Combo>
              <ComboInput aria-label="Model number" placeholder="Please input the model number or PCB" />
              <ChevronDown />
            </Combo>
            <SearchButton aria-label="Search"><SearchIcon /></SearchButton>
          </SearchRow>
          <LeftBody>
            <Categories>
              <Group $active>
                <GroupName $active>VIP</GroupName>
                {vipCategories.map(c => (
                  <Category key={c.name} $active={c.active}>{c.icon}{c.name}</Category>
                ))}
              </Group>
              <Group>
                <GroupName>Custom</GroupName>
                {customCategories.map(c => <Category key={c.name}>{c.icon}{c.name}</Category>)}
              </Group>
              <Category><StarIcon />Favorites</Category>
            </Categories>
            <TreePane>
              <TreeList>
                {tree.map((n, i) => (
                  <TreeRow key={i} $level={n.level} $selected={n.selected}>
                    <TreeIcon $leaf={n.kind !== 'folder'}>{nodeIcons[n.kind]}</TreeIcon>
                    <TreeName>{n.name}</TreeName>
                  </TreeRow>
                ))}
              </TreeList>
            </TreePane>
            <InnerTrack><InnerThumb /></InnerTrack>
            <Track>
              <ChevronUp />
              <Thumb $top={427} $height={50} />
            </Track>
          </LeftBody>
        </LeftPane>
        <Splitter>
          <SplitterHandle aria-label="Collapse panel"><HandleIcon /></SplitterHandle>
        </Splitter>
        <RightPane>
          <TopTabs>
            <MemberButton><HomeIcon />Member Center</MemberButton>
          </TopTabs>
          <DocTabs>
            <DocTab>P30Pro HL1V0GUEM PAD.pdf</DocTab>
            <PlainButton aria-label="Close all"><CloseAllIcon /></PlainButton>
          </DocTabs>
          <Tools>
            <PlainButton aria-label="Two pages"><TwoPagesIcon /></PlainButton>
            <ToolDivider />
            <ToolGroup $gap={8}>
              <PlainButton aria-label="Rotate left"><RotateIcon /></PlainButton>
              <PlainButton aria-label="Rotate right"><RotateIcon flip /></PlainButton>
            </ToolGroup>
            <ToolDivider />
            <PageLabel>Page:<ToolInput $width={50} defaultValue="1" /></PageLabel>
            <ToolGroup $gap={6} $lead={2}>
              <span>/2</span>
              <PlainButton aria-label="Previous page"><ArrowIcon /></PlainButton>
              <PlainButton aria-label="Next page"><ArrowIcon flip /></PlainButton>
            </ToolGroup>
            <ToolDivider />
            <ToolGroup $gap={8} $lead={2}>
              <PlainButton aria-label="Zoom in"><ZoomIcon plus /></PlainButton>
              <PlainButton aria-label="Zoom out"><ZoomIcon /></PlainButton>
            </ToolGroup>
            <ToolDivider />
            <PageLabel>Lookup<ToolInput $width={150} /></PageLabel>
            <ToolGroup $gap={12} $lead={6}>
              <PlainButton aria-label="Find previous"><TriangleIcon /></PlainButton>
              <PlainButton aria-label="Find next"><TriangleIcon flip /></PlainButton>
            </ToolGroup>
            <ToolGroup $gap={6} $lead={10}>
              <PlainButton><WholeWord>Abi</WholeWord></PlainButton>
              <PlainButton aria-label="Find"><BinocularsIcon /></PlainButton>
            </ToolGroup>
          </Tools>
          <Viewer>
            <Desk><Drawing /></Desk>
            <Track $wide>
              <ChevronUp />
              <Thumb $top={1} $height={327} />
              <TrackEnd><ChevronUp flip /></TrackEnd>
            </Track>
          </Viewer>
        </RightPane>
      </Main>
      <StatusBar>XZZ Schematics https://www.xzz.hk</StatusBar>
    </Window>
  );
}
